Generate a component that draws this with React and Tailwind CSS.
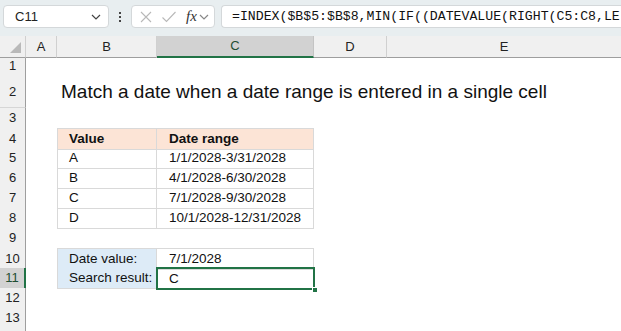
import React from 'react';

const cols = 'grid grid-cols-[26px_31px_100px_157px_73px_1fr]';
const sheetFont = { fontFamily: '"Liberation Sans", Arial, sans-serif' };

function RowHead({ n, active }) {
  return (
    <div
      className={
        'flex items-center justify-center border-b border-r text-[13px] ' +
        (active
          ? 'bg-[#d2d2d2] border-b-[#c4c4c4] border-r-2 border-r-[#217346] text-[#1f4e33]'
          : 'bg-[#f0f0f0] border-b-[#d6d6d6] border-r-[#9e9e9e] text-[#222]')
      }
    >
      {n}
    </div>
  );
}

function Row({ n, h = 'h-[20px]', active, b, c, title }) {
  return (
    <div className={cols + ' ' + h}>
      <RowHead n={n} active={active} />
      <div />
      {title ? (
        <div className="col-span-4 flex items-end pl-[4px] pb-[2px] text-[19px] text-[#111] whitespace-nowrap">
          {title}
        </div>
      ) : (
        <>
          {b || <div />}
          {c || <div />}
          <div />
          <div />
        </>
      )}
    </div>
  );
}

function CellB({ children, bg = '', bold, top }) {
  return (
    <div
      className={
        'flex items-center pl-[11px] text-[13.5px] text-[#111] whitespace-nowrap border-l border-r border-b border-[#d9d9d9] ' +
        (top ? 'border-t ' : '') +
        (bold ? 'font-bold ' : '') +
        bg
      }
    >
      {children}
    </div>
  );
}

function CellC({ children, bg = '', bold, top }) {
  return (
    <div
      className={
        'flex items-center pl-[12px] text-[13.5px] text-[#111] whitespace-nowrap border-r border-b border-[#d9d9d9] ' +
        (top ? 'border-t ' : '') +
        (bold ? 'font-bold ' : '') +
        bg
      }
    >
      {children}
    </div>
  );
}

function Chevron({ className }) {
  return (
    <svg className={className} width="10" height="6" viewBox="0 0 10 6" fill="none">
      <path d="M1 1l4 4 4-4" stroke="currentColor" strokeWidth="1.2" />
    </svg>
  );
}

export default function App() {
  return (
    <div className="w-[621px] h-[331px] overflow-hidden bg-white" style={sheetFont}>
      {/* formula bar */}
      <div className="h-[36px] bg-[#e8eef0] flex items-start pt-[5px] pl-[3px]">
        <div className="w-[106px] h-[23px] bg-white border border-[#d4d8da] rounded-[4px] flex items-center pl-[11px] pr-[7px] justify-between">
          <span className="text-[13px] text-[#222]">C11</span>
          <Chevron className="text-[#444]" />
        </div>
        <div className="w-[22px] h-[23px] flex flex-col items-center justify-center gap-[2px]">
          <span className="w-[2px] h-[2px] bg-[#444]" />
          <span className="w-[2px] h-[2px] bg-[#444]" />
          <span className="w-[2px] h-[2px] bg-[#444]" />
        </div>
        <div className="w-[84px] h-[23px] bg-white border border-[#d4d8da] rounded-[4px] flex items-center pl-[7px]">
          <svg width="14" height="14" viewBox="0 0 14 14" fill="none">
            <path d="M2 2l10 10M12 2L2 12" stroke="#b8b8b8" strokeWidth="1.1" />
          </svg>
          <svg className="ml-[8px]" width="16" height="14" viewBox="0 0 16 14" fill="none">
            <path d="M1.5 7.5l4 4L14.5 2" stroke="#b8b8b8" strokeWidth="1.1" />
          </svg>
          <span
            className="ml-[9px] text-[15px] italic text-[#333] leading-none"
            style={{ fontFamily: '"Liberation Serif", "Times New Roman", serif' }}
          >
            fx
          </span>
          <Chevron className="ml-[2px] text-[#888]" />
        </div>
        <div className="ml-[6px] flex-1 min-w-0 h-[23px] bg-white border border-r-0 border-[#d4d8da] rounded-l-[4px] flex items-center pl-[10px] overflow-hidden">
          <span
            className="text-[13.2px] text-[#111] whitespace-nowrap"
            style={{ fontFamily: '"Liberation Mono", "Courier New", monospace' }}
          >
            =INDEX($B$5:$B$8,MIN(IF((DATEVALUE(RIGHT(C5:C8,LE
          </span>
        </div>
      </div>

      {/* column headers */}
      <div className={cols + ' h-[20px] text-[13px] text-[#222]'}>
        <div className="bg-[#f0f0f0] border-r border-b border-r-[#d0d0d0] border-b-[#9e9e9e] relative">
          <svg className="absolute right-[4px] bottom-[4px]" width="11" height="11" viewBox="0 0 11 11">
            <path d="M11 0V11H0z" fill="#b9b9b9" />
          </svg>
        </div>
        <div className="bg-[#f0f0f0] border-r border-b border-r-[#d0d0d0] border-b-[#9e9e9e] flex items-center justify-center">A</div>
        <div className="bg-[#f0f0f0] border-r border-b border-r-[#d0d0d0] border-b-[#9e9e9e] flex items-center justify-center">B</div>
        <div className="bg-[#d2d2d2] border-r border-r-[#c4c4c4] border-b-2 border-b-[#217346] flex items-center justify-center text-[#1f4e33]">C</div>
        <div className="bg-[#f0f0f0] border-r border-b border-r-[#d0d0d0] border-b-[#9e9e9e] flex items-center justify-center">D</div>
        <div className="bg-[#f0f0f0] border-b border-b-[#9e9e9e] flex items-center justify-center">E</div>
      </div>

      <Row n={1} />
      <Row n={2} h="h-[32px]" title="Match a date when a date range is entered in a single cell" />
      <Row n={3} />
      <Row
        n={4}
        b={<CellB top bold bg="bg-[#fce4d6]">Value</CellB>}
        c={<CellC top bold bg="bg-[#fce4d6]">Date range</CellC>}
      />
      <Row n={5} b={<CellB>A</CellB>} c={<CellC>1/1/2028-3/31/2028</CellC>} />
      <Row n={6} b={<CellB>B</CellB>} c={<CellC>4/1/2028-6/30/2028</CellC>} />
      <Row n={7} b={<CellB>C</CellB>} c={<CellC>7/1/2028-9/30/2028</CellC>} />
      <Row n={8} b={<CellB>D</CellB>} c={<CellC>10/1/2028-12/31/2028</CellC>} />
      <Row n={9} />
      <Row
        n={10}
        b={<CellB top bg="bg-[#ddebf7]">Date value:</CellB>}
        c={<CellC top>7/1/2028</CellC>}
      />
      <Row
        n={11}
        active
        b={<CellB bg="bg-[#ddebf7]">Search result:</CellB>}
        c={
          <div className="relative flex items-center pl-[12px] text-[13.5px] text-[#111]">
            <div className="absolute -left-px -top-px -right-px -bottom-px border-2 border-[#217346]" />
            <div className="absolute -right-[4px] -bottom-[4px] w-[6px] h-[6px] bg-[#217346] border border-white" />
            C
          </div>
        }
      />
      <Row n={12} />
      <Row n={13} />
      <Row n="" />
    </div>
  );
}
